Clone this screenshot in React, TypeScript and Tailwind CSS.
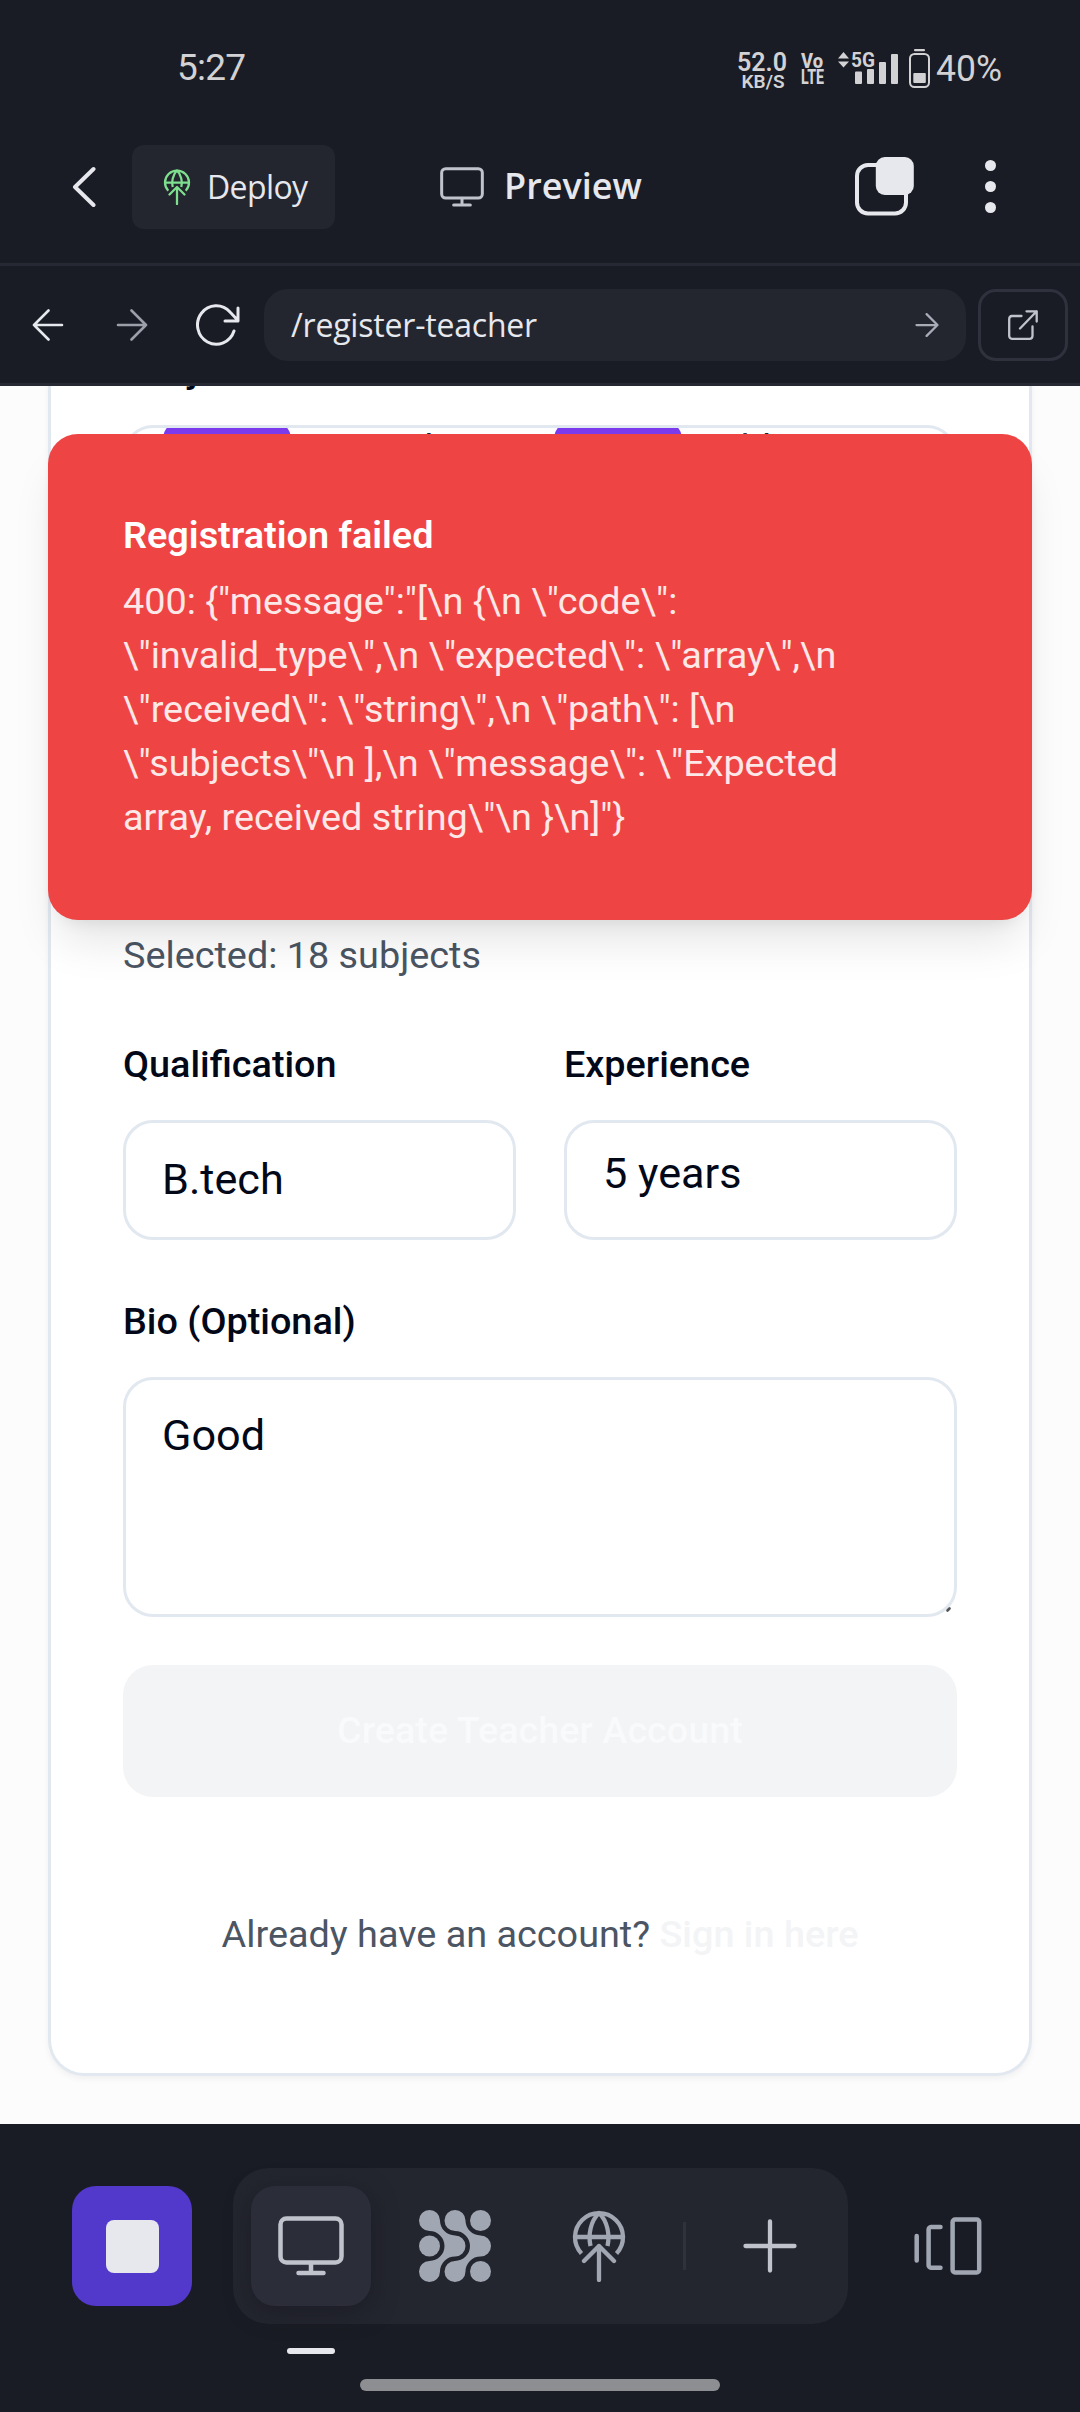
import React from "react";

function GlobeUp({ className, width = 4 }: { className?: string; width?: number }) {
  return (
    <svg viewBox="0 0 72 72" className={className} fill="none" stroke="currentColor" strokeWidth={width} strokeLinecap="round" strokeLinejoin="round">
      <path strokeLinecap="butt" d="M18.500 43.500A24 24 0 1 1 53.500 43.500" />
      <path strokeLinecap="butt" d="M27.500 36C25 25 27.500 11 36 3C44.500 11 47 25 44.500 36" />
      <path d="M12 27H60" />
      <path d="M36 70V36M21 51L36 36L51 51" />
    </svg>
  );
}

function MonitorIcon({ className, width = 4 }: { className?: string; width?: number }) {
  return (
    <svg viewBox="0 0 66 60" className={className} fill="none" stroke="currentColor" strokeWidth={width} strokeLinecap="round">
      <rect x="2.500" y="2.500" width="61" height="44" rx="6" />
      <path d="M33 47V57M20.500 57H45.500" />
    </svg>
  );
}

function ArrowRight({ className, width = 2.6 }: { className?: string; width?: number }) {
  return (
    <svg viewBox="0 0 32 32" className={className} fill="none" stroke="currentColor" strokeWidth={width} strokeLinecap="round" strokeLinejoin="round">
      <path d="M2 16H30M15.500 1.500L30 16L15.500 30.500" />
    </svg>
  );
}

function StatusBar() {
  return (
    <div className="flex h-[136px] items-center justify-between pl-[177px] pr-[73px] font-[Roboto,sans-serif] text-[#d2d2d4]">
      <span className="-mt-[2px] text-[37px] leading-none tracking-[-0.8px]">5:27</span>
      <svg className="h-[60px] w-[274px] overflow-visible" viewBox="733 38 274 60" fill="currentColor" fontFamily="Roboto, sans-serif">
        <text x="737" y="70.800" fontSize="25.500" fontWeight="600" textLength="50" lengthAdjust="spacingAndGlyphs">52.0</text>
        <text x="741.500" y="87.800" fontSize="19" fontWeight="600" textLength="43" lengthAdjust="spacingAndGlyphs">KB/S</text>
        <text x="801" y="68" fontSize="20" fontWeight="800" textLength="22" lengthAdjust="spacingAndGlyphs">Vo</text>
        <text x="801" y="83.700" fontSize="19.500" fontWeight="800" textLength="23" lengthAdjust="spacingAndGlyphs">LTE</text>
        <path d="M838 58.500L843.500 52L849 58.500ZM838 61.500L843.500 67.500L849 61.500Z" />
        <text x="851" y="67" fontSize="20.500" fontWeight="700" textLength="24" lengthAdjust="spacingAndGlyphs">5G</text>
        <rect x="855" y="71.500" width="7" height="12.500" rx="1" />
        <rect x="867" y="69" width="7" height="15" rx="1" />
        <rect x="879" y="62" width="7" height="22" rx="1" />
        <rect x="891" y="54" width="7" height="30" rx="1" />
        <rect x="914" y="49" width="11" height="2.300" rx="1" />
        <rect x="910" y="54" width="19" height="33" rx="4.500" fill="none" stroke="currentColor" strokeWidth="2" />
        <rect x="913.300" y="73" width="12.500" height="10" rx="1" />
        <text x="936" y="80.500" fontSize="37" textLength="66" lengthAdjust="spacingAndGlyphs">40%</text>
      </svg>
    </div>
  );
}

function Header() {
  return (
    <header className="flex h-[127px] items-start pl-[72px] text-[#e6e8ee]">
      <svg className="mt-[30px] h-[42px] w-[24px]" viewBox="0 0 24 42" fill="none" stroke="currentColor" strokeWidth="4" strokeLinecap="round" strokeLinejoin="round">
        <path d="M21.500 3L3 21L21.500 39" />
      </svg>
      <button className="ml-[36px] mt-[9px] flex h-[84px] w-[203px] items-center rounded-xl bg-[#24262f] pl-[27px]">
        <GlobeUp className="size-[36px] text-[#7ee08f]" width={4.5} />
        <span className="ml-[12px] text-[32px] tracking-[-0.6px]">Deploy</span>
      </button>
      <div className="ml-[105px] mt-[9px] flex h-[84px] w-[201px] items-center">
        <MonitorIcon className="h-[40px] w-[44px] shrink-0 text-[#c0c3cc]" width={4.5} />
        <span className="-mt-[2px] ml-[20px] text-[36px] font-semibold">Preview</span>
      </div>
      <svg className="ml-[214px] mt-[21px] h-[59px] w-[59px]" viewBox="0 0 59 59">
        <rect x="2" y="8" width="49" height="48.500" rx="11" fill="none" stroke="currentColor" strokeWidth="4" />
        <rect x="20.800" y="0" width="38" height="38" rx="9" fill="currentColor" />
      </svg>
      <div className="ml-[71px] mt-[24px] flex w-[11px] flex-col gap-[10px]">
        <span className="size-[11px] rounded-full bg-[#e6e8ee]" />
        <span className="size-[11px] rounded-full bg-[#e6e8ee]" />
        <span className="size-[11px] rounded-full bg-[#e6e8ee]" />
      </div>
    </header>
  );
}

function AddressBar() {
  return (
    <div className="flex h-[123px] items-center border-y-[3px] border-[#262834] pl-[32px] text-[#e6e8ee]">
      <ArrowRight className="size-[32px] rotate-180" />
      <ArrowRight className="ml-[52px] size-[32px] text-[#9a9faa]" />
      <svg className="ml-[48px] h-[42px] w-[44px]" viewBox="0 0 44 42" fill="none" stroke="currentColor" strokeWidth="3" strokeLinecap="round" strokeLinejoin="round">
        <path d="M38 27A18.700 19.200 0 1 1 34 8L42 16.500M42 4V17H29" />
      </svg>
      <div className="ml-[24px] flex h-[72px] w-[702px] items-center justify-between rounded-3xl bg-[#24262f] pl-[27px] pr-[27px]">
        <span className="text-[32px] tracking-[-0.2px]">/register-teacher</span>
        <ArrowRight className="size-[24px] text-[#a8acb6]" width={3} />
      </div>
      <div className="ml-[12px] flex h-[72px] w-[90px] items-center justify-center rounded-[18px] border-[3px] border-[#2f313d]">
        <svg className="size-[30px] text-[#c0c3cc]" viewBox="0 0 30 30" fill="none" stroke="currentColor" strokeWidth="2.300" strokeLinecap="round" strokeLinejoin="round">
          <path d="M13.500 6H4A3 3 0 0 0 1.200 9V26A3 3 0 0 0 4 28.800H21.500A3 3 0 0 0 24.500 26V16.500M18.500 1.300H28.700V11.500M28.700 1.300L12 18.500" />
        </svg>
      </div>
    </div>
  );
}

function Label({ children }: { children: React.ReactNode }) {
  return <div className="pb-[37px] pt-[15px] text-[37.8px] font-medium leading-[37px] text-[#020817]">{children}</div>;
}

function Toast() {
  return (
    <div className="absolute left-[48px] top-[48px] h-[486px] w-[984px] rounded-[30px] bg-[#ef4444] px-[75px] pt-[74px] text-[37.8px] leading-[54px] shadow-[0_30px_45px_-9px_rgba(0,0,0,0.1),0_12px_18px_-12px_rgba(0,0,0,0.1)]">
      <div className="font-semibold text-white">Registration failed</div>
      <div className="mt-3 whitespace-pre text-[#fde8e8]">
        <div>{'400: {"message":"[\\n {\\n \\"code\\":'}</div>
        <div>{'\\"invalid_type\\",\\n \\"expected\\": \\"array\\",\\n'}</div>
        <div>{'\\"received\\": \\"string\\",\\n \\"path\\": [\\n'}</div>
        <div>{'\\"subjects\\"\\n ],\\n \\"message\\": \\"Expected'}</div>
        <div>{'array, received string\\"\\n }\\n]"}'}</div>
      </div>
    </div>
  );
}

function SubjectRow({ name }: { name: string }) {
  return (
    <div className="-mt-[7px] flex w-[391px] items-start">
      <div className="h-[60px] w-[128px] rounded-[18px] bg-[#7c3aed]" />
      <span className="ml-[14px] text-[37.8px] leading-[54px]">{name}</span>
    </div>
  );
}

function RegisterForm() {
  return (
    <main className="relative h-[1738px] overflow-hidden bg-[#fcfcfc] px-[48px] font-[Roboto,sans-serif]">
      <div className="-mt-[50px] flex h-[1740px] flex-col rounded-b-[36px] border-x-[3px] border-b-[3px] border-[#e2e8f0] bg-white px-[72px] text-[#020817] shadow-[0_3px_6px_rgba(0,0,0,0.05)]">
        <Label>Subjects</Label>
        <div className="flex h-[480px] overflow-hidden rounded-[30px] border-[3px] border-[#e2e8f0] pl-[37px]">
          <SubjectRow name="General" />
          <SubjectRow name="Public Art" />
        </div>
        <div className="mb-px mt-[23px] text-[37.8px] leading-[54px] text-[#4b5563]">Selected: 18 subjects</div>
        <div className="mt-12 grid grid-cols-2 gap-12">
          <div>
            <Label>Qualification</Label>
            <div className="flex h-[120px] items-center rounded-[30px] border-[3px] border-[#e2e8f0] pl-[36px] text-[43.2px]">B.tech</div>
          </div>
          <div>
            <Label>Experience</Label>
            <div className="flex h-[120px] items-center rounded-[30px] border-[3px] border-[#e2e8f0] pb-[12px] pl-[36px] text-[43.2px]">5 years</div>
          </div>
        </div>
        <div className="mt-12">
          <Label>Bio (Optional)</Label>
          <div className="relative h-[240px] rounded-[30px] border-[3px] border-[#e2e8f0] pl-[36px] pt-[26px] text-[43.2px] leading-[60px]">
            Good
            <svg className="absolute bottom-[2px] right-[3px] size-[5px]" viewBox="0 0 5 5">
              <path d="M1.500 3.500L3.500 1.500" stroke="#555" strokeWidth="2.600" strokeLinecap="round" />
            </svg>
          </div>
        </div>
        <div className="mt-12 flex h-[132px] items-center justify-center rounded-[30px] bg-[#f3f4f6] pb-px text-[37.8px] font-medium text-[#f9fafb]">Create Teacher Account</div>
        <div className="mt-[110px] text-center text-[37.8px] leading-[54px] text-[#4b5563]">
          Already have an account? <span className="font-medium text-[#f3f4f6]">Sign in here</span>
        </div>
      </div>
      <Toast />
    </main>
  );
}

function BlobGrid() {
  const body = "M10.500 0A10.500 10.500 0 0 1 21 10.500A15 15 0 0 0 36 25.500A10.500 10.500 0 0 1 36 46.500A15 15 0 0 0 21 61.500A10.500 10.500 0 1 1 10.500 51A15 15 0 0 0 10.500 21A10.500 10.500 0 0 1 10.500 0Z";
  return (
    <svg viewBox="0 0 72 72" className="size-[72px]" fill="currentColor">
      <path d={body} />
      <path d={body} transform="translate(25.500 0)" />
      <circle cx="10.500" cy="36" r="10.500" />
      <circle cx="61.500" cy="10.500" r="10.500" />
      <circle cx="61.500" cy="61.500" r="10.500" />
    </svg>
  );
}

function BottomNav() {
  return (
    <nav className="flex h-[288px] flex-col pt-[44px]">
      <div className="flex h-[156px] items-center pl-[72px]">
        <div className="flex size-[120px] items-center justify-center rounded-3xl bg-[#5239cc]">
          <span className="size-[53px] rounded-lg bg-[#e6e8ee]" />
        </div>
        <div className="ml-[41px] flex h-[156px] w-[615px] items-center gap-6 rounded-[36px] bg-[#24262f] px-[18px] text-[#a1a7b2]">
          <div className="flex size-[120px] items-center justify-center rounded-3xl bg-[#2b2d38] text-[#c0c3cc] shadow-[0_6px_24px_rgba(20,20,30,0.5)]">
            <MonitorIcon className="h-[60px] w-[66px]" width={4.5} />
          </div>
          <div className="flex size-[120px] items-center justify-center"><BlobGrid /></div>
          <div className="flex size-[120px] items-center justify-center"><GlobeUp className="size-[72px]" width={4.3} /></div>
          <span className="h-12 w-[3px] bg-[#2f313d]" />
          <div className="flex size-[120px] items-center justify-center text-[#c0c3cc]">
            <svg viewBox="0 0 54 54" className="size-[54px]" stroke="currentColor" strokeWidth="4.300" strokeLinecap="round">
              <path d="M27 2.500V51.500M2.500 27H51.500" />
            </svg>
          </div>
        </div>
        <svg viewBox="0 0 68 60" className="ml-[66px] h-[60px] w-[68px] text-[#a1a7b2]" fill="none" stroke="currentColor" strokeWidth="4.500" strokeLinecap="round" strokeLinejoin="round">
          <path d="M2.700 20V44.500M26.500 11H17A2.500 2.500 0 0 0 14.600 13.500V49A2.500 2.500 0 0 0 17 51.700H26.500" />
          <rect x="38.600" y="3.500" width="26.600" height="53" rx="2.500" />
        </svg>
      </div>
      <span className="ml-[287px] mt-6 h-[6px] w-12 rounded-full bg-[#e6e8ee]" />
      <span className="mx-auto mt-[25px] h-3 w-[360px] rounded-full bg-[#8d8e92]" />
    </nav>
  );
}

export default function App() {
  return (
    <div className="h-[2412px] w-[1080px] overflow-hidden bg-[#1a1c25] font-['Open_Sans',sans-serif]">
      <StatusBar />
      <Header />
      <AddressBar />
      <RegisterForm />
      <BottomNav />
    </div>
  );
}
